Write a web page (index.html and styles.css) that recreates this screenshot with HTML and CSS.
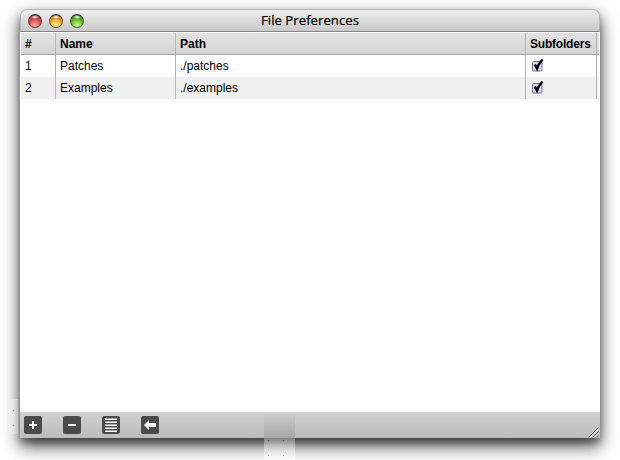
FILE: index.html
```html
<!DOCTYPE html>
<html lang="en">
<head>
<meta charset="utf-8">
<title>File Preferences</title>
<link rel="stylesheet" href="styles.css">
</head>
<body>
<main class="window">
  <header class="titlebar">
    <div class="lights"><i class="light red"></i><i class="light yellow"></i><i class="light green"></i></div>
    <h1><svg width="110" height="20"><text x="5" y="15" textLength="98" lengthAdjust="spacingAndGlyphs">File Preferences</text></svg></h1>
  </header>
  <section class="table">
    <div class="row head"><span>#</span><span>Name</span><span>Path</span><span class="tight">Subfolders</span><span></span></div>
    <div class="row"><span>1</span><span>Patches</span><span>./patches</span><span><svg class="check" width="12" height="14"><use href="#tick"/></svg></span><span></span></div>
    <div class="row alt"><span>2</span><span>Examples</span><span>./examples</span><span><svg class="check" width="12" height="14"><use href="#tick"/></svg></span><span></span></div>
  </section>
  <footer class="toolbar">
    <svg class="tool" viewBox="0 0 18 18"><path d="M9 5v8M5 9h8" stroke="#fff" stroke-width="2"/></svg>
    <svg class="tool" viewBox="0 0 18 18"><path d="M5 9h8" stroke="#fff" stroke-width="2"/></svg>
    <svg class="tool" viewBox="0 0 18 18"><path d="M3 3.200h12M3 6.200h12M3 9.200h12M3 12.200h12M3 15.200h12" stroke="#fff" stroke-width="1.600"/></svg>
    <svg class="tool" viewBox="0 0 18 18"><path d="M3 9l5-5v3h7v4H8v3z" fill="#fff"/></svg>
    <svg class="grip" width="12" height="12"><path d="M0.500 11.500l10-10M4.500 11.500l6-6M8.500 11.500l2-2" stroke="#5c5c5c" stroke-width="1"/><path d="M2 11.500l8.500-8.500M6 11.500l4.500-4.500" stroke="#eee" stroke-width=".8"/></svg>
  </footer>
</main>
<div class="ghost left"><i></i><i></i></div>
<div class="ghost bottom"><i></i><i></i><i></i><i></i></div>
<svg width="0" height="0" class="defs"><defs><g id="tick"><rect x=".500" y="2.500" width="9.500" height="9.500" rx="1" fill="#d6d6f5" stroke="#72728a"/><path d="M2.800 5.500L5 9.500Q6.500 5 10.500 .5" fill="none" stroke="#000" stroke-width="2.500"/></g></defs></svg>
</body>
</html>
```
FILE: styles.css
```css
* { box-sizing: border-box; }
body {
  margin: 0;
  padding: 9px 20px 0;
  height: 460px;
  overflow: hidden;
  background: #fff;
  font: 12px "Liberation Sans", Arial, sans-serif;
  color: #000;
}
.window {
  width: 580px;
  height: 429px;
  display: flex;
  flex-direction: column;
  background: #fff;
  border-radius: 7px 7px 0 0;
  box-shadow: 0 8px 18px rgba(0, 0, 0, .72), 0 5px 6px rgba(0, 0, 0, .3);
}
.titlebar {
  height: 23px;
  display: grid;
  grid-template-columns: 235px 110px 1fr;
  background: linear-gradient(#f0f0f0, #e3e3e3 30%, #c8c8c8);
  border: 1px solid #b5b5b5;
  border-bottom-color: #858585;
  border-radius: 7px 7px 0 0;
}
.lights { display: flex; gap: 7px; padding: 4px 0 0 7px; }
.light {
  width: 14px;
  height: 14px;
  border-radius: 50%;
  border: 1px solid rgba(40, 30, 30, .55);
  border-top-color: #333;
}
.red { background: radial-gradient(ellipse 4px 2px at 50% 2px, #fff, transparent), radial-gradient(circle at 50% 85%, #ffaca4, #d2504e 50%, #811c1c); }
.yellow { background: radial-gradient(ellipse 4px 2px at 50% 2px, #fff, transparent), radial-gradient(circle at 50% 85%, #fff78b, #f0a431 50%, #914710); }
.green { background: radial-gradient(ellipse 4px 2px at 50% 2px, #fff, transparent), radial-gradient(circle at 50% 85%, #cdff86, #66b62d 50%, #245c0e); }
h1 { margin: 0; height: 20px; font: 12.5px "Open Sans", sans-serif; }
h1 text { stroke: #000; stroke-width: .2px; }
h1 svg { display: block; }
.table { flex: 1; padding: 0 1px; }
.row {
  height: 22px;
  display: grid;
  grid-template-columns: 35px 120px 350px 71px 1fr;
  line-height: 22px;
}
.row span { padding-left: 4px; border-right: 1px solid #b3b3b3; height: 22px; }
.row span:last-child { border: 0; padding: 0; }
.alt { background: #f0f0f0; }
.head {
  height: 23px;
  font-weight: bold;
  background: linear-gradient(#e2e2e2, #d5d5d5);
  border-top: 1px solid #fff;
  border-bottom: 1px solid #a5a5a5;
}
.head span { height: 21px; }
.head .tight { letter-spacing: -.2px; }
.check { display: block; margin: 4px 0 0 2px; }
.toolbar {
  height: 26px;
  display: flex;
  align-items: flex-start;
  gap: 21px;
  padding: 4px 0 0 4px;
  background: linear-gradient(#d0d0d0, #bcbcbc);
}
.tool { width: 18px; height: 18px; background: #4b4b4b; border-radius: 2px; }
.grip { margin: 10px 0 0 auto; }
.ghost { position: absolute; display: grid; grid-template-columns: 15px 15px; grid-auto-rows: 15px; }
.ghost i { width: 1px; height: 1px; background: rgba(0, 0, 0, .3); }
.left { left: 9px; top: 399px; width: 9px; height: 35px; padding: 11px 0 0 4px; grid-template-columns: 5px; background: rgba(255, 255, 255, .3); }
.bottom {
  left: 264px;
  top: 412px;
  width: 31px;
  height: 48px;
  padding: 28px 0 0 4px;
  background: linear-gradient(rgba(90, 90, 90, 0), rgba(90, 90, 90, .22) 26px, rgba(255, 255, 255, .3) 26px, rgba(255, 255, 255, .5));
}
.defs { position: absolute; }
```
